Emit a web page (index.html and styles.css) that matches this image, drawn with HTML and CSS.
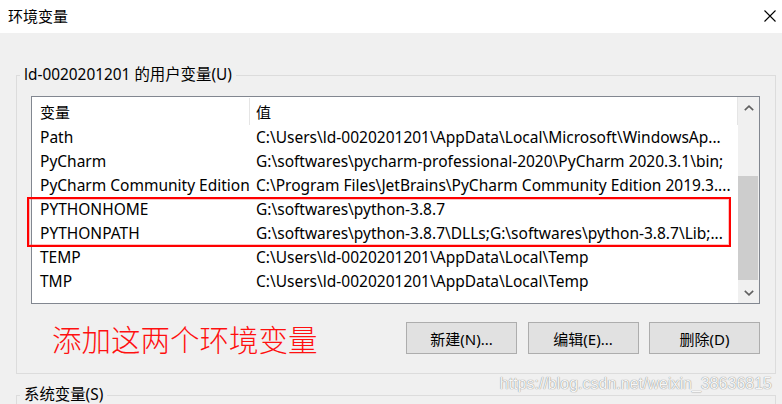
FILE: index.html
```html
<!DOCTYPE html>
<html lang="zh-CN">
<head>
<meta charset="utf-8">
<title>环境变量</title>
<link rel="stylesheet" href="styles.css">
</head>
<body>
<div class="window">
  <div class="titlebar">
    <span class="title">环境变量</span>
    <svg class="close" width="12" height="12" viewBox="0 0 12 12"><path d="M0.5 0.5 L11.5 11.5 M11.5 0.5 L0.5 11.5" stroke="#000" stroke-width="1.1" fill="none"/></svg>
  </div>
  <div class="main">
    <fieldset class="group">
      <legend class="legend">ld-0020201201 的用户变量(U)</legend>
      <div class="group-body">
        <div class="listbox">
          <div class="list-content">
            <div class="row head">
              <div class="cell c1">变量</div>
              <div class="cell c2">值</div>
            </div>
            <div class="row"><div class="cell c1">Path</div><div class="cell c2">C:\Users\ld-0020201201\AppData\Local\Microsoft\WindowsAp...</div></div>
            <div class="row"><div class="cell c1">PyCharm</div><div class="cell c2">G:\softwares\pycharm-professional-2020\PyCharm 2020.3.1\bin;</div></div>
            <div class="row"><div class="cell c1">PyCharm Community Edition</div><div class="cell c2">C:\Program Files\JetBrains\PyCharm Community Edition 2019.3....</div></div>
            <div class="row"><div class="cell c1">PYTHONHOME</div><div class="cell c2">G:\softwares\python-3.8.7</div></div>
            <div class="row"><div class="cell c1">PYTHONPATH</div><div class="cell c2">G:\softwares\python-3.8.7\DLLs;G:\softwares\python-3.8.7\Lib;...</div></div>
            <div class="row"><div class="cell c1">TEMP</div><div class="cell c2">C:\Users\ld-0020201201\AppData\Local\Temp</div></div>
            <div class="row"><div class="cell c1">TMP</div><div class="cell c2">C:\Users\ld-0020201201\AppData\Local\Temp</div></div>
          </div>
          <div class="scrollbar">
            <div class="arrow">
              <svg width="10" height="6" viewBox="0 0 10 6"><path d="M0.8 5.2 L5 1.2 L9.2 5.2" stroke="#606060" stroke-width="1.6" fill="none"/></svg>
            </div>
            <div class="track">
              <div class="thumb"></div>
            </div>
            <div class="arrow">
              <svg width="10" height="6" viewBox="0 0 10 6"><path d="M0.8 0.8 L5 4.8 L9.2 0.8" stroke="#606060" stroke-width="1.6" fill="none"/></svg>
            </div>
          </div>
          <div class="highlight"></div>
        </div>
        <div class="actions">
          <span class="note">添加这两个环境变量</span>
          <button class="btn">新建(N)...</button>
          <button class="btn">编辑(E)...</button>
          <button class="btn">删除(D)</button>
        </div>
      </div>
    </fieldset>
    <fieldset class="group group2">
      <legend class="legend">系统变量(S)</legend>
    </fieldset>
    <div class="watermark">https://blog.csdn.net/weixin_38636815</div>
  </div>
</div>
</body>
</html>
```

FILE: styles.css
```css
* { box-sizing: border-box; }
html, body {
  margin: 0;
  padding: 0;
  width: 782px;
  height: 404px;
  overflow: hidden;
  background: #f0f0f0;
}
body {
  font-family: "Noto Sans", "Noto Sans CJK SC", sans-serif;
  font-size: 15px;
  color: #000;
}
.window {
  width: 782px;
  height: 404px;
  overflow: hidden;
  position: relative;
}
.titlebar {
  height: 33px;
  background: #fff;
  display: flex;
  align-items: center;
  justify-content: space-between;
  padding: 0 6px 2px 8px;
}
.title {
  line-height: 20px;
}
.close {
  display: block;
}
.main {
  padding-top: 32px;
  position: relative;
}
.group {
  margin: 0 6px 0 16px;
  padding: 0;
  border: 1px solid #dcdcdc;
  min-width: 0;
}
.legend {
  margin-left: 3px;
  padding: 0 4px;
  line-height: 20px;
  height: 20px;
  font-size: 15.4px;
}
.group-body {
  padding: 11px 15px 19px 14px;
}
.listbox {
  position: relative;
  display: flex;
  height: 208px;
  border: 1px solid #828790;
  background: #fff;
}
.list-content {
  flex: 1;
  min-width: 0;
}
.row {
  display: grid;
  grid-template-columns: 218px 1fr;
  height: 24px;
  line-height: 24px;
  white-space: nowrap;
  font-size: 15.5px;
}
.row.head {
  height: 28px;
  line-height: 28px;
  padding-top: 1px;
  font-size: 15px;
  border-right: 1px solid #e5e5e5;
}
.cell {
  overflow: hidden;
}
.c1 { padding-left: 8px; }
.c2 { padding-left: 6px; }
.head .c1 { border-right: 1px solid #e5e5e5; }
.scrollbar {
  width: 21px;
  background: #f0f0f0;
  display: flex;
  flex-direction: column;
}
.arrow {
  height: 21px;
  display: flex;
  align-items: center;
  justify-content: center;
}
.arrow svg { display: block; }
.track {
  flex: 1;
  padding-top: 58px;
  padding-bottom: 1px;
  display: flex;
  flex-direction: column;
}
.thumb {
  margin: 0 1px 0 0;
  height: 104px;
  background: #cdcdcd;
}
.highlight {
  position: absolute;
  left: -5px;
  top: 100px;
  width: 704px;
  height: 50px;
  border: 2px solid #ff0000;
  box-shadow: inset 0 0 0 1px rgba(255, 80, 80, 0.35);
  pointer-events: none;
}
.actions {
  display: flex;
  align-items: center;
  gap: 10.5px;
  margin-top: 18px;
}
.note {
  margin-left: 21px;
  margin-right: auto;
  color: #ff1010;
  font-family: "Noto Sans CJK SC", sans-serif;
  font-weight: 200;
  font-size: 29.5px;
  line-height: 32px;
}
.btn {
  width: 111px;
  height: 32px;
  background: #e1e1e1;
  border: 1px solid #adadad;
  border-radius: 0;
  font-family: "Noto Sans", "Noto Sans CJK SC", sans-serif;
  font-size: 15px;
  color: #000;
  padding: 0;
}
.group2 {
  margin-top: 11px;
  height: 40px;
}
.watermark {
  position: absolute;
  right: 10px;
  top: 342px;
  font-family: "Liberation Sans", Arial, sans-serif;
  font-size: 16px;
  line-height: 18px;
  color: #f6f6f6;
  text-shadow: 0 0 1px rgba(0, 0, 0, 0.45), 0 0 1px rgba(0, 0, 0, 0.2);
}
```
